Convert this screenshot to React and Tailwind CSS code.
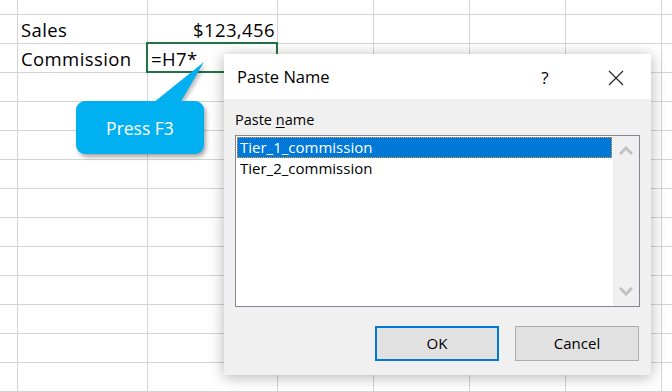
import React from "react";

const cols = [18, 130, 130, 96, 96, 96, 96, 10];
const rowHeights = [15, 29, 29, 29, 29, 29, 29, 29, 29, 29, 29, 29, 29, 29];

function Cell({ r, c }) {
  let content = null;
  if (r === 1 && c === 1) content = <span className="pl-[3px]">Sales</span>;
  if (r === 1 && c === 2)
    content = <span className="ml-auto pr-[2px]">$123,456</span>;
  if (r === 2 && c === 1) content = <span className="pl-[3px]">Commission</span>;
  if (r === 2 && c === 2) content = <span className="pl-[3px]">=H7*</span>;
  const last = c === cols.length - 1;
  return (
    <div
      className={`relative flex items-center overflow-visible whitespace-nowrap border-b border-[#d4d4d4] pt-[1px] ${
        last ? "" : "border-r"
      }`}
    >
      {content}
      {r === 2 && c === 2 && (
        <div className="absolute left-[-2px] top-[-2px] h-[31px] w-[132px] border-2 border-[#217346]" />
      )}
    </div>
  );
}

function Sheet() {
  const cells = [];
  rowHeights.forEach((_, r) =>
    cols.forEach((_, c) => cells.push(<Cell key={`${r}-${c}`} r={r} c={c} />))
  );
  return (
    <div
      className="grid h-[392px] w-[672px] overflow-hidden bg-white text-[18.5px] tracking-[0.4px] text-black [font-family:'Open_Sans',sans-serif]"
      style={{
        gridTemplateColumns: cols.map((w) => `${w}px`).join(" "),
        gridTemplateRows: rowHeights.map((h) => `${h}px`).join(" "),
      }}
    >
      {cells}
    </div>
  );
}

function Callout() {
  return (
    <>
      <svg
        className="absolute left-[140px] top-[58px] drop-shadow-[2px_2px_2px_rgba(0,0,0,0.3)]"
        width="70"
        height="50"
        viewBox="0 0 70 50"
      >
        <polygon points="13,45 64,4 40,45" fill="#00b0f0" />
      </svg>
      <div className="absolute left-[76px] top-[101px] flex h-[53px] w-[128px] items-center justify-center rounded-[9px] bg-[#00b0f0] pt-[1px] text-[17.5px] text-white shadow-[2px_3px_4px_rgba(0,0,0,0.35)] [font-family:'Open_Sans',sans-serif]">
        Press F3
      </div>
    </>
  );
}

function Dialog() {
  return (
    <div className="absolute left-[224px] top-[54px] flex h-[321px] w-[427px] flex-col bg-[#f0f0f0] text-black shadow-[0_2px_14px_rgba(0,0,0,0.3)] [font-family:'Open_Sans','Noto_Sans',sans-serif]">
      <div className="flex h-[45px] items-center bg-white pl-[13px] pr-[27px] pt-[2px]">
        <span className="text-[16.5px]">Paste Name</span>
        <span className="ml-auto w-[20px] text-center text-[17px]">?</span>
        <svg className="ml-[53px]" width="16" height="16" viewBox="0 0 16 16">
          <path d="M1 1 L15 15 M15 1 L1 15" stroke="#222" strokeWidth="1.1" fill="none" />
        </svg>
      </div>
      <div className="flex flex-1 flex-col px-[11px] pt-[11px]">
        <div className="h-[20px] text-[14.5px] leading-[20px]">
          Paste <span className="underline underline-offset-2">n</span>ame
        </div>
        <div className="mt-[5px] flex h-[172px] border border-[#82878f] bg-white">
          <div className="flex flex-1 flex-col p-px text-[15px] leading-[21px]">
            <div className="bg-[#0078d7] pl-[3px] text-white outline-1 outline-dotted outline-offset-[-1px] outline-[#f0a030]">
              Tier_1_commission
            </div>
            <div className="pl-[3px]">Tier_2_commission</div>
          </div>
          <div className="flex w-[26px] flex-col items-center justify-between bg-[#f0f0f0] py-[10px]">
            <svg width="14" height="9" viewBox="0 0 14 9">
              <path d="M1 8 L7 2 L13 8" stroke="#c2c2c2" strokeWidth="3" fill="none" />
            </svg>
            <svg width="14" height="9" viewBox="0 0 14 9">
              <path d="M1 1 L7 7 L13 1" stroke="#c2c2c2" strokeWidth="3" fill="none" />
            </svg>
          </div>
        </div>
        <div className="mt-[19px] flex justify-end gap-[16px] pr-[1px]">
          <button className="flex h-[35px] w-[124px] items-center justify-center border-2 border-[#0078d7] bg-[#e1e1e1] text-[15px]">
            OK
          </button>
          <button className="flex h-[35px] w-[124px] items-center justify-center border border-[#adadad] bg-[#e1e1e1] text-[15px]">
            Cancel
          </button>
        </div>
      </div>
    </div>
  );
}

export default function App() {
  return (
    <div className="relative h-[392px] w-[672px] overflow-hidden bg-white">
      <Sheet />
      <Callout />
      <Dialog />
    </div>
  );
}
